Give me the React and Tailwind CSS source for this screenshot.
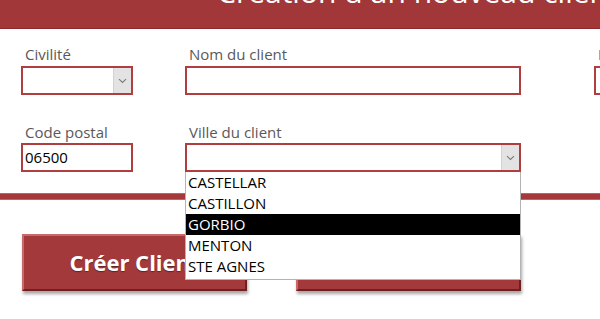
import React from "react";

const font = { fontFamily: '"Open Sans", "Noto Sans", sans-serif' };

function Chevron() {
  return (
    <svg width="9" height="6" viewBox="0 0 9 6" fill="none">
      <path d="M1 1.2 L4.5 4.5 L8 1.2" stroke="#7a7a7a" strokeWidth="1.1" />
    </svg>
  );
}

function Box({ w, children, combo }) {
  return (
    <div
      className={`relative flex h-[29px] items-center border-2 border-[#b03d40] bg-white ${w}`}
    >
      <div className="flex-1 pl-[2px] text-[15px] leading-none text-black">{children}</div>
      {combo && (
        <div className="flex h-full w-[18px] items-center justify-center border-l border-[#d2d2d2] bg-[#e3e3e3]">
          <Chevron />
        </div>
      )}
    </div>
  );
}

function Label({ children }) {
  return <div className="h-[20px] text-[15px] leading-[20px] text-[#595959] pl-[4px] whitespace-nowrap">{children}</div>;
}

function Button({ children }) {
  return (
    <div className="flex h-[57px] w-[225px] items-center justify-center border-t-2 border-l-2 border-t-[#c86a6c] border-l-[#c86a6c] border-b-2 border-r-2 border-b-[#6e1f21] border-r-[#6e1f21] bg-[#a4393c] shadow-[1px_3px_3px_rgba(0,0,0,0.35)]">
      <span className="text-[22px] font-bold text-white [text-shadow:0_1px_1px_rgba(0,0,0,0.4)]">{children}</span>
    </div>
  );
}

export default function App() {
  const items = ["CASTELLAR", "CASTILLON", "GORBIO", "MENTON", "STE AGNES"];
  return (
    <div className="h-[319px] w-[600px] overflow-hidden bg-white" style={font}>
      <div className="h-[29px] overflow-hidden border-b border-[#8c2a2d] bg-[#a2373a]">
        <div className="-mt-[28px] pl-[217px] whitespace-nowrap text-[30px] leading-[40px] text-white">
          Création d'un nouveau client
        </div>
      </div>

      <div className="flex gap-[52px] pl-[21px] pt-[15px]">
        <div className="w-[112px] shrink-0">
          <Label>Civilité</Label>
          <div className="mt-[2px]"><Box w="w-[112px]" combo /></div>
        </div>
        <div className="w-[336px] shrink-0">
          <Label>Nom du client</Label>
          <div className="mt-[2px]"><Box w="w-[336px]" /></div>
        </div>
        <div className="ml-[21px] w-[100px] shrink-0">
          <Label>Prénom</Label>
          <div className="mt-[2px]"><Box w="w-[100px]" /></div>
        </div>
      </div>

      <div className="flex gap-[52px] pl-[21px] pt-[27px]">
        <div className="w-[112px] shrink-0">
          <Label>Code postal</Label>
          <div className="mt-[1px]"><Box w="w-[112px]">06500</Box></div>
        </div>
        <div className="relative z-10 w-[336px] shrink-0">
          <Label>Ville du client</Label>
          <div className="mt-[1px]"><Box w="w-[336px]" combo /></div>
          <div className="absolute left-0 top-full w-[336px] border border-t-0 border-[#b4b4b4] bg-white pb-[2px]">
            {items.map((it) => (
              <div
                key={it}
                className={`h-[21px] pl-[2px] text-[15px] leading-[21px] ${
                  it === "GORBIO" ? "bg-black text-white" : "text-black"
                }`}
              >
                {it}
              </div>
            ))}
          </div>
        </div>
      </div>

      <div className="mt-[21px] h-[7px] border-y border-[#c06467] bg-[#a4383b]" />

      <div className="flex gap-[49px] pl-[22px] pt-[34px]">
        <Button>Créer Client</Button>
        <Button>Annuler</Button>
      </div>
    </div>
  );
}
